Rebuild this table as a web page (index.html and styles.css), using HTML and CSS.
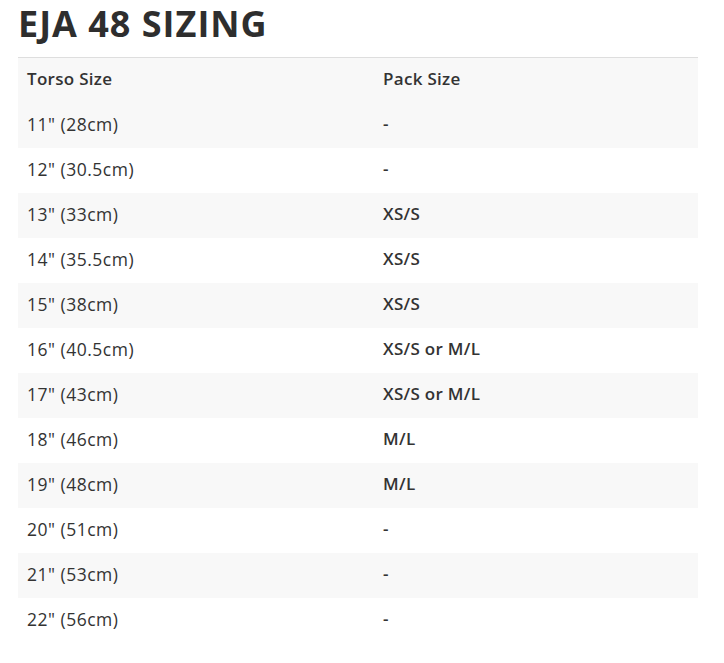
FILE: index.html
```html
<!DOCTYPE html>
<html>
<head>
<meta charset="utf-8">
<link rel="stylesheet" href="styles.css">
</head>
<body>
<h1 class="title">EJA 48 SIZING</h1>
<table class="sizing">
<thead>
<tr><th class="c1">Torso Size</th><th class="c2">Pack Size</th></tr>
</thead>
<tbody>
<tr><td>11" (28cm)</td><td class="b">-</td></tr>
<tr><td>12" (30.5cm)</td><td class="b">-</td></tr>
<tr><td>13" (33cm)</td><td class="b">XS/S</td></tr>
<tr><td>14" (35.5cm)</td><td class="b">XS/S</td></tr>
<tr><td>15" (38cm)</td><td class="b">XS/S</td></tr>
<tr><td>16" (40.5cm)</td><td class="b">XS/S or M/L</td></tr>
<tr><td>17" (43cm)</td><td class="b">XS/S or M/L</td></tr>
<tr><td>18" (46cm)</td><td class="b">M/L</td></tr>
<tr><td>19" (48cm)</td><td class="b">M/L</td></tr>
<tr><td>20" (51cm)</td><td class="b">-</td></tr>
<tr><td>21" (53cm)</td><td class="b">-</td></tr>
<tr><td>22" (56cm)</td><td class="b">-</td></tr>
</tbody>
</table>
</body>
</html>
```
FILE: styles.css
```css
body {
  margin: 0;
  padding: 0 18px;
  background: #fff;
  font-family: "Open Sans", sans-serif;
  color: #333;
}
.title {
  margin: 0;
  padding-top: 2px;
  height: 55px;
  font-size: 36px;
  line-height: 44px;
  font-weight: 700;
  letter-spacing: 1px;
  color: #2e2e2e;
}
.sizing {
  width: 680px;
  border-collapse: collapse;
  border-top: 1px solid #dedede;
  font-size: 17.5px;
  letter-spacing: 0.5px;
}
.sizing th, .sizing td {
  height: 45px;
  padding: 0 9px 2px;
  text-align: left;
  vertical-align: middle;
  line-height: 24px;
  box-sizing: border-box;
}
.sizing th, .b {
  font-weight: 600;
  font-size: 17px;
  letter-spacing: 0.3px;
}
.c1 { width: 356px; }
.sizing thead tr { background: #f8f8f8; }
.sizing tbody tr:nth-child(odd) { background: #f8f8f8; }
```
